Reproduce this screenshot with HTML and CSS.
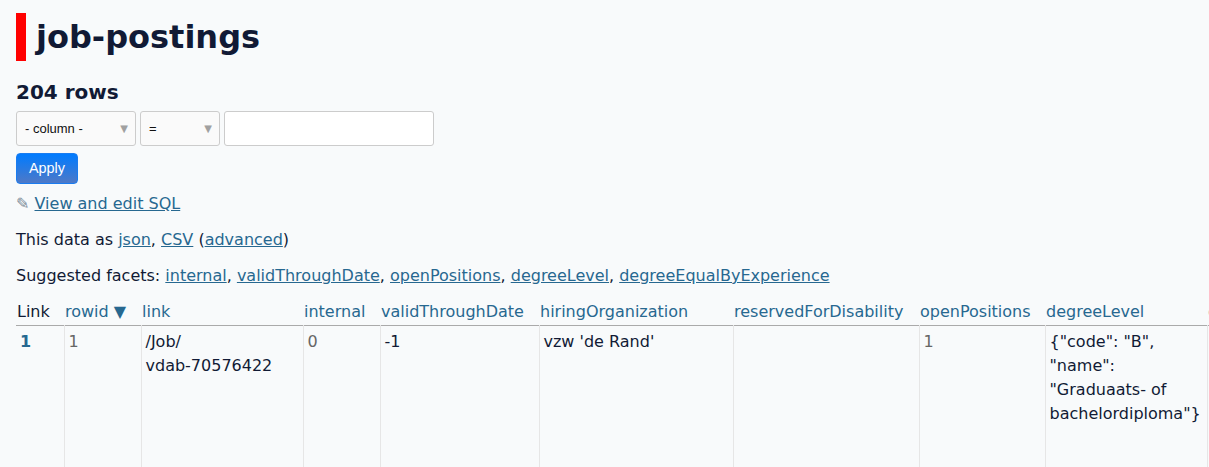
FILE: index.html
```html
<!DOCTYPE html>
<html lang="en">
<head>
<meta charset="utf-8">
<title>job-postings</title>
<link rel="stylesheet" href="styles.css">
</head>
<body>
<div class="page">
  <h1 class="title">job-postings</h1>
  <h3 class="count">204 rows</h3>
  <form class="filters">
    <div class="filter-row">
      <div class="select-wrapper col-select"><select><option>- column -</option></select></div>
      <div class="select-wrapper op-select"><select><option>=</option></select></div>
      <input class="filter-value" type="text">
    </div>
    <div class="filter-actions"><input class="apply" type="submit" value="Apply"></div>
  </form>
  <p><a class="not-underlined" href="#"><span class="pencil">✎</span> <span class="underlined">View and edit SQL</span></a></p>
  <p>This data as <a href="#">json</a>, <a href="#">CSV</a> (<a href="#">advanced</a>)</p>
  <p class="facets">Suggested facets: <a href="#">internal</a>, <a href="#">validThroughDate</a>, <a href="#">openPositions</a>, <a href="#">degreeLevel</a>, <a href="#">degreeEqualByExperience</a></p>
  <div class="table-wrapper">
    <table class="rows-and-columns">
      <thead>
        <tr>
          <th class="w-link">Link</th>
          <th class="w-rowid"><a href="#">rowid&nbsp;▼</a></th>
          <th class="w-url"><a href="#">link</a></th>
          <th class="w-internal"><a href="#">internal</a></th>
          <th class="w-valid"><a href="#">validThroughDate</a></th>
          <th class="w-org"><a href="#">hiringOrganization</a></th>
          <th class="w-reserved"><a href="#">reservedForDisability</a></th>
          <th class="w-open"><a href="#">openPositions</a></th>
          <th class="w-degree"><a href="#">degreeLevel</a></th>
          <th class="w-equal"><a href="#">degreeEqualByExperience</a></th>
        </tr>
      </thead>
      <tbody>
        <tr>
          <td class="type-pk"><a href="#">1</a></td>
          <td class="type-int">1</td>
          <td>/Job/<wbr><span class="nowrap">vdab-70576422</span></td>
          <td class="type-int">0</td>
          <td>-1</td>
          <td>vzw 'de Rand'</td>
          <td></td>
          <td class="type-int">1</td>
          <td>{"code": "B", "name": "Graduaats- of bachelordiploma"}</td>
          <td class="type-int">0</td>
        </tr>
      </tbody>
    </table>
  </div>
</div>
</body>
</html>
```
FILE: styles.css
```css
html, body {
  margin: 0;
  padding: 0;
}
html {
  overflow-x: hidden;
}
body {
  font-family: "DejaVu Sans", sans-serif;
  font-size: 16px;
  line-height: 1.5;
  color: #111a35;
  background-color: #f8fafb;
  overflow-x: hidden;
}
a:link, a:visited {
  color: #276890;
  text-decoration: underline;
}
.page {
  padding: 0 16px;
}
.title {
  margin: 13px 0 0 0;
  font-size: 32px;
  line-height: 48px;
  font-weight: bold;
  border-left: 10px solid #ff0000;
  padding-left: 10px;
}
.count {
  margin: 16px 0 4px 0;
  font-size: 20px;
  line-height: 30px;
  font-weight: bold;
}
.filters {
  margin: 0 0 8px 0;
}
.filter-row {
  display: flex;
  gap: 4px;
}
.select-wrapper {
  position: relative;
  box-sizing: border-box;
  border: 1px solid #ccc;
  border-radius: 3px;
  background-color: #fafafa;
  height: 35px;
}
.col-select { width: 120px; }
.op-select { width: 80px; }
.select-wrapper::after {
  content: "\25BC";
  position: absolute;
  top: 9px;
  right: 7px;
  font-size: 10px;
  line-height: 15px;
  color: #a0a0a0;
  pointer-events: none;
}
.select-wrapper select {
  -webkit-appearance: none;
  appearance: none;
  border: none;
  background: transparent;
  width: 100%;
  height: 33px;
  padding: 0 8px;
  font-family: "Liberation Sans", Arial, sans-serif;
  font-size: 13px;
  color: #111;
  outline: none;
}
.filter-value {
  box-sizing: border-box;
  width: 210px;
  height: 35px;
  border: 1px solid #ccc;
  border-radius: 3px;
  background: #fff;
  padding: 0 8px;
  font-family: "Liberation Sans", Arial, sans-serif;
  font-size: 13px;
}
.filter-actions {
  margin-top: 7px;
  display: flex;
}
.apply {
  box-sizing: border-box;
  height: 31px;
  padding: 0 12px;
  font-family: "Liberation Sans", Arial, sans-serif;
  font-size: 14.4px;
  line-height: 1;
  color: #fff;
  background: linear-gradient(180deg, #007bff 0%, #4e79c7 100%);
  border: 1px solid #1a7cf0;
  border-radius: 4px;
  cursor: pointer;
}
p {
  margin: 0 0 12px 0;
}
p.facets {
  margin-bottom: 11px;
}
a.not-underlined {
  text-decoration: none;
}
.pencil {
  color: #7a8a98;
}
.underlined {
  text-decoration: underline;
}
.nowrap {
  white-space: nowrap;
}
.table-wrapper {
  overflow: visible;
}
table.rows-and-columns {
  border-collapse: collapse;
  table-layout: fixed;
  width: 1421px;
}
.rows-and-columns th {
  box-sizing: border-box;
  text-align: left;
  font-weight: normal;
  white-space: nowrap;
  padding: 1px 16px 1px 1px;
  overflow: hidden;
}
.rows-and-columns a:link, .rows-and-columns a:visited {
  text-decoration: none;
}
.rows-and-columns td {
  border-top: 1px solid #aaa;
  border-right: 1px solid #e6e6e6;
  padding: 4px;
  vertical-align: top;
  white-space: pre-wrap;
  height: 200px;
}
.rows-and-columns td:last-child {
  border-right: none;
}
.type-pk a {
  font-weight: bold;
}
.type-int {
  color: #666;
}
.w-link { width: 48px; }
.w-rowid { width: 77px; }
.w-url { width: 162px; }
.w-internal { width: 77px; }
.w-valid { width: 159px; }
.w-org { width: 194px; }
.w-reserved { width: 186px; }
.w-open { width: 126px; }
.w-degree { width: 162px; }
.w-equal { width: 230px; }
```
